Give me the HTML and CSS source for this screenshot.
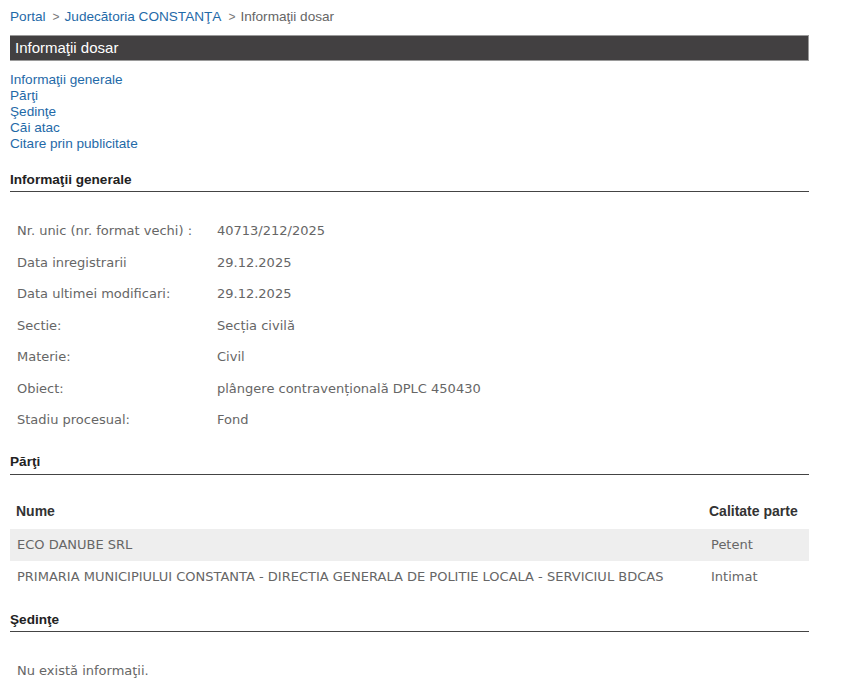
FILE: index.html
```html
<!DOCTYPE html>
<html lang="ro">
<head>
<meta charset="utf-8">
<title>Informaţii dosar</title>
<link rel="stylesheet" href="styles.css">
</head>
<body>
<div class="page">
  <div class="crumbs">
    <a href="#">Portal</a><span class="sep">&gt;</span><a href="#">Judecătoria CONSTANŢA</a><span class="sep">&gt;</span><span class="cur">Informaţii dosar</span>
  </div>
  <div class="titlebar">Informaţii dosar</div>
  <ul class="toc">
    <li><a href="#">Informaţii generale</a></li>
    <li><a href="#">Părţi</a></li>
    <li><a href="#">Şedinţe</a></li>
    <li><a href="#">Căi atac</a></li>
    <li><a href="#">Citare prin publicitate</a></li>
  </ul>

  <h2 class="sect first">Informaţii generale</h2>
  <div class="info">
    <div class="row"><span class="lbl">Nr. unic (nr. format vechi) :</span><span class="val">40713/212/2025</span></div>
    <div class="row"><span class="lbl">Data inregistrarii</span><span class="val">29.12.2025</span></div>
    <div class="row"><span class="lbl">Data ultimei modificari:</span><span class="val">29.12.2025</span></div>
    <div class="row"><span class="lbl">Sectie:</span><span class="val">Secția civilă</span></div>
    <div class="row"><span class="lbl">Materie:</span><span class="val">Civil</span></div>
    <div class="row"><span class="lbl">Obiect:</span><span class="val">plângere contravențională DPLC 450430</span></div>
    <div class="row"><span class="lbl">Stadiu procesual:</span><span class="val">Fond</span></div>
  </div>

  <h2 class="sect parti-h">Părţi</h2>
  <table class="parti">
    <thead>
      <tr><th>Nume</th><th class="cal">Calitate parte</th></tr>
    </thead>
    <tbody>
      <tr class="alt"><td>ECO DANUBE SRL</td><td class="cal">Petent</td></tr>
      <tr><td>PRIMARIA MUNICIPIULUI CONSTANTA - DIRECTIA GENERALA DE POLITIE LOCALA - SERVICIUL BDCAS</td><td class="cal">Intimat</td></tr>
    </tbody>
  </table>

  <h2 class="sect sed">Şedinţe</h2>
  <p class="none">Nu există informaţii.</p>
</div>
</body>
</html>
```
FILE: styles.css
```css
html, body {
  margin: 0;
  padding: 0;
  background: #fff;
}
body {
  font-family: "Liberation Sans", Arial, sans-serif;
  font-size: 14px;
  color: #333;
}
.page {
  width: 799px;
  padding: 9px 0 0 10px;
}
a {
  color: #1f6aa8;
  text-decoration: none;
}
.crumbs {
  height: 16px;
  line-height: 16px;
  font-size: 13.6px;
}
.crumbs .sep {
  color: #777;
  font-size: 12px;
  margin: 0 5px 0 7px;
}
.crumbs .cur {
  color: #666;
}
.titlebar {
  margin-top: 10px;
  height: 24px;
  line-height: 24px;
  background: #424041;
  border: 1px solid #9a9a9a;
  border-left: 0;
  color: #fff;
  font-size: 15px;
  padding-left: 5px;
}
.toc {
  list-style: none;
  margin: 11px 0 0 0;
  padding: 0;
}
.toc li {
  line-height: 16px;
  font-size: 13.6px;
}
.sect {
  margin: 18px 0 0 0;
  font-size: 13.6px;
  font-weight: bold;
  color: #222;
  line-height: 16px;
  padding-bottom: 3px;
  border-bottom: 1px solid #444;
  font-family: "Liberation Sans", Arial, sans-serif;
}
.sect.first {
  margin-top: 20px;
}
.sect.parti-h {
  padding-bottom: 4px;
}
.sect.sed {
  margin-top: 19px;
}
.info {
  padding: 23px 0 0 7px;
  font-family: "DejaVu Sans", Verdana, sans-serif;
  font-size: 13px;
  color: #666;
}
.row {
  display: flex;
  height: 31.5px;
  align-items: center;
}
.lbl {
  width: 200px;
}
.parti {
  width: 100%;
  border-collapse: collapse;
  margin-top: 19px;
  font-family: "DejaVu Sans", Verdana, sans-serif;
  font-size: 13px;
}
.parti th {
  text-align: left;
  font-family: "Liberation Sans", Arial, sans-serif;
  font-size: 14px;
  color: #333;
  height: 35px;
  padding: 0 6px;
}
.parti td {
  color: #666;
  height: 32px;
  padding: 0 7px;
}
.parti th.cal {
  width: 93px;
  padding-left: 6px;
}
.parti td.cal {
  width: 91px;
  padding-left: 8px;
}
.parti tr.alt td {
  background: #eee;
}
.none {
  margin: 31px 0 0 7px;
  font-family: "DejaVu Sans", Verdana, sans-serif;
  font-size: 13px;
  color: #666;
}
```
